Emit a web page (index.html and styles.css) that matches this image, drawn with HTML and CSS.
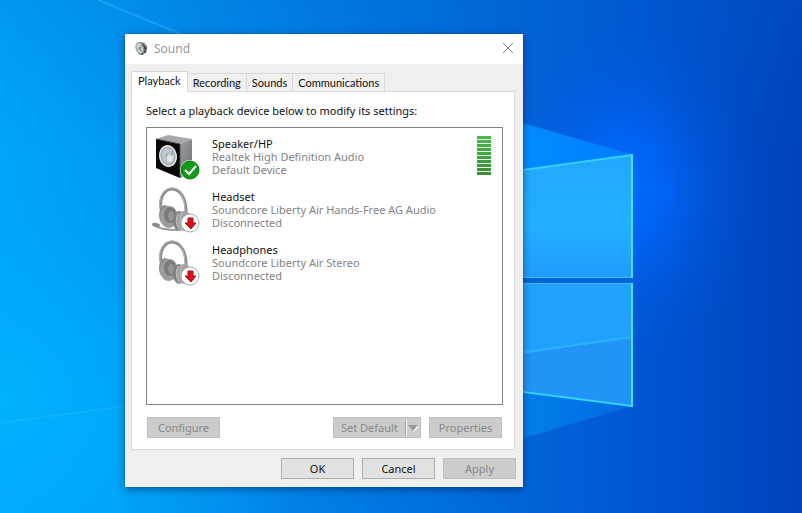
FILE: index.html
```html
<!DOCTYPE html>
<html lang="en">
<head>
<meta charset="utf-8">
<meta name="viewport" content="width=device-width, initial-scale=1">
<title>Sound</title>
<link rel="stylesheet" href="styles.css">
</head>
<body>
<main class="desktop">
  <svg class="wallpaper" viewBox="0 0 802 513" preserveAspectRatio="none" aria-hidden="true">
    <defs>
      <linearGradient id="sky" x1="0" y1="0" x2="1" y2="0">
        <stop offset="0" stop-color="#00a6fa"/>
        <stop offset=".16" stop-color="#0098f2"/>
        <stop offset=".4" stop-color="#007ee6"/>
        <stop offset=".64" stop-color="#0066d8"/>
        <stop offset=".8" stop-color="#0056d4"/>
        <stop offset="1" stop-color="#0042bc"/>
      </linearGradient>
      <radialGradient id="glow" gradientUnits="userSpaceOnUse" cx="0" cy="0" r="1" gradientTransform="translate(624 190) scale(130 170)">
        <stop offset="0" stop-color="#006cff"/>
        <stop offset=".3" stop-color="#0066fc" stop-opacity=".8"/>
        <stop offset=".65" stop-color="#0060ee" stop-opacity=".3"/>
        <stop offset="1" stop-color="#0058e0" stop-opacity="0"/>
      </radialGradient>
      <radialGradient id="corner" gradientUnits="userSpaceOnUse" cx="0" cy="0" r="1" gradientTransform="translate(0 400) scale(330 260)">
        <stop offset="0" stop-color="#00b2ff"/>
        <stop offset="1" stop-color="#00a4fa" stop-opacity="0"/>
      </radialGradient>
      <linearGradient id="shade" x1="0" y1="0" x2="0" y2="1">
        <stop offset="0" stop-color="#0060c8" stop-opacity=".2"/>
        <stop offset=".3" stop-color="#0060c8" stop-opacity="0"/>
      </linearGradient>
      <linearGradient id="paneTop" x1="0" y1="0" x2="0" y2="1">
        <stop offset="0" stop-color="#22a8ff"/>
        <stop offset=".55" stop-color="#22b0ff"/>
        <stop offset="1" stop-color="#209cff"/>
      </linearGradient>
      <linearGradient id="beamTop" x1="0" y1="0" x2="1" y2="0">
        <stop offset="0" stop-color="#0090ff"/>
        <stop offset="1" stop-color="#007cff"/>
      </linearGradient>
      <linearGradient id="beamBottom" x1="0" y1="0" x2="1" y2="0">
        <stop offset="0" stop-color="#0084ec"/>
        <stop offset="1" stop-color="#006ae0"/>
      </linearGradient>
    </defs>
    <rect width="802" height="513" fill="url(#sky)"/>
    <rect width="802" height="513" fill="url(#corner)"/>
    <rect width="802" height="513" fill="url(#shade)"/>
    <rect width="802" height="513" fill="url(#glow)"/>
    <path d="M98 0 220 50" stroke="#30b0ff" stroke-width="2" opacity=".5"/>
    <path d="M0 423 125 406V513H0z" fill="#00b0ff" opacity=".35"/>
    <path d="M0 423 125 406" stroke="#30c0ff" opacity=".5"/>
    <path d="M500 117 632 155 500 175z" fill="url(#beamTop)"/>
    <path d="M500 117 632 155" stroke="#1a90ff" opacity=".5"/>
    <path d="M500 388 632 406 500 445z" fill="url(#beamBottom)"/>
    <path d="M500 275H633V286H500z" fill="#0066d8"/>
    <path d="M500 173 632 155V278H500z" fill="url(#paneTop)"/>
    <path d="M500 283H632V406L500 389z" fill="#20a0ff"/>
    <path d="M500 356 632 337V406L500 389z" fill="#2294f8"/>
    <path d="M500 356 632 337" stroke="#28b4ff" stroke-width="2"/>
    <path d="M500 277.500H632M500 283.500H632" stroke="#42baff"/>
    <path d="M500 173 632 155M500 389 632 406" stroke="#34d0ff" stroke-width="2" fill="none"/>
    <path d="M632 154V278M632 283V407" stroke="#42e4ff" stroke-width="2"/>
  </svg>

  <section class="window" aria-labelledby="window-title">
    <header class="titlebar">
      <svg class="app-icon" viewBox="0 0 16 16" aria-hidden="true">
        <path d="M6 1 11 2 14 6 13 12 9 15 5 14z" fill="#3a4143"/>
        <path d="m9 2 2 2m0-1 2 4m-2 2 2 2m-3 0 1 3" stroke="#a8b0b2"/>
        <ellipse cx="6" cy="7.500" rx="4.500" ry="6.500" transform="rotate(-12 6 7.500)" fill="#a3abad"/>
        <ellipse cx="6" cy="7.500" rx="3" ry="5" transform="rotate(-12 6 7.500)" fill="#cdd4d5"/>
        <path d="M6 8 9 4M6 8l2 3" stroke="#6d7779"/>
        <circle cx="6" cy="8" r="1.500" fill="#8b9496"/>
      </svg>
      <h1 class="title" id="window-title">Sound</h1>
      <button class="close" type="button" aria-label="Close">
        <svg viewBox="0 0 12 12" aria-hidden="true"><path d="m1 1 10 10M11 1 1 11" stroke="#808080" fill="none"/></svg>
      </button>
    </header>

    <div class="body">
      <div class="tabs" role="tablist">
        <button class="tab tab-active" type="button" role="tab" aria-selected="true">Playback</button>
        <button class="tab" type="button" role="tab" aria-selected="false">Recording</button>
        <button class="tab" type="button" role="tab" aria-selected="false">Sounds</button>
        <button class="tab" type="button" role="tab" aria-selected="false">Communications</button>
      </div>

      <div class="panel" role="tabpanel">
        <p class="hint">Select a playback device below to modify its settings:</p>
        <ul class="devices">
          <li class="device">
            <svg class="device-icon" viewBox="0 0 48 48" aria-hidden="true">
              <defs>
                <linearGradient id="side" x1="0" y1="0" x2="1" y2="1"><stop stop-color="#9b9ba1"/><stop offset="1" stop-color="#73737a"/></linearGradient>
                <radialGradient id="cone"><stop stop-color="#8c999f"/><stop offset=".5" stop-color="#c2cbd0"/><stop offset="1" stop-color="#b4bdc2"/></radialGradient>
              </defs>
              <path d="M4 5 16 1 40 5 28 10z" fill="#a7a7ad"/>
              <path d="M28 10 40 5V38L28 44z" fill="url(#side)"/>
              <path d="M4 5 28 10V44L4 34z" fill="#080909"/>
              <path d="M4 5 28 10V44" fill="none" stroke="#4b4b4f"/>
              <ellipse cx="16" cy="22" rx="9" ry="11" transform="rotate(-10 16 22)" fill="#e8ecee"/>
              <ellipse cx="16" cy="22" rx="7" ry="9" transform="rotate(-10 16 22)" fill="url(#cone)" stroke="#9da6aa"/>
              <ellipse cx="18" cy="24" rx="3" ry="4" fill="#dfe5e8"/>
              <path d="m19 22 2-5" stroke="#8c979d"/>
              <circle cx="38" cy="36" r="10" fill="#fff"/>
              <circle cx="38" cy="36" r="9" fill="#109b18" stroke="#087a10"/>
              <path d="m33 36 4 4 7-8" fill="none" stroke="#fff" stroke-width="2"/>
            </svg>
            <div class="device-text">
              <strong class="device-name">Speaker/HP</strong>
              <span>Realtek High Definition Audio</span>
              <span>Default Device</span>
            </div>
            <div class="meter" role="img" aria-label="Output level">
              <i></i><i></i><i></i><i></i><i></i><i></i><i></i><i></i><i></i><i></i>
            </div>
          </li>
          <li class="device">
            <svg class="device-icon" viewBox="0 0 48 48" aria-hidden="true">
              <defs>
                <g id="headphones">
                  <path d="M9 22C7 10 13 2 20 2c9 0 15 11 14 26" fill="none" stroke="#8d8d8d" stroke-width="3"/>
                  <path d="M8 21C6 9 13 1 20 1c9 0 13 10 13 25" fill="none" stroke="#b8b8b8"/>
                  <ellipse cx="13" cy="28" rx="6" ry="10" fill="#8b8b8b"/>
                  <ellipse cx="17" cy="30" rx="9" ry="11" fill="#9c9c9c"/>
                  <ellipse cx="18" cy="28" rx="6" ry="8" fill="#7b7b7b"/>
                  <ellipse cx="19" cy="29" rx="3" ry="5" fill="#959595"/>
                  <ellipse cx="27" cy="34" rx="6" ry="10" fill="#808080"/>
                  <ellipse cx="32" cy="34" rx="8" ry="10" fill="#a2a2a2"/>
                  <path d="M26 26q-4 8 1 17M30 25q-4 8 0 18" fill="none" stroke="#bcbcbc"/>
                </g>
                <g id="unplugged">
                  <circle cx="38" cy="36" r="9" fill="#fff" stroke="#a8a8a8"/>
                  <path d="M36 31h5v5h3l-5 6-6-6h3z" fill="#d4101a" stroke="#b90c15"/>
                </g>
              </defs>
              <path d="M4 39q5 4 22 4" fill="none" stroke="#999" stroke-width="2"/>
              <ellipse cx="4" cy="38" rx="4" ry="2" fill="#888" transform="rotate(15 4 38)"/>
              <use href="#headphones"/>
              <use href="#unplugged"/>
            </svg>
            <div class="device-text">
              <strong class="device-name">Headset</strong>
              <span>Soundcore Liberty Air Hands-Free AG Audio</span>
              <span>Disconnected</span>
            </div>
          </li>
          <li class="device">
            <svg class="device-icon" viewBox="0 0 48 48" aria-hidden="true">
              <use href="#headphones"/>
              <use href="#unplugged"/>
            </svg>
            <div class="device-text">
              <strong class="device-name">Headphones</strong>
              <span>Soundcore Liberty Air Stereo</span>
              <span>Disconnected</span>
            </div>
          </li>
        </ul>
        <div class="actions">
          <button class="button" type="button" disabled>Configure</button>
          <button class="button split" type="button" disabled>
            <span class="split-label">Set Default</span>
            <span class="split-arrow"><svg viewBox="0 0 12 8" aria-hidden="true"><path d="M2 2h10L7 8z" fill="#fff"/><path d="M1 1h10L6 7z" fill="#969696"/></svg></span>
          </button>
          <button class="button" type="button" disabled>Properties</button>
        </div>
      </div>

      <footer class="footer">
        <button class="button" type="button">OK</button>
        <button class="button" type="button">Cancel</button>
        <button class="button" type="button" disabled>Apply</button>
      </footer>
    </div>
  </section>
</main>
</body>
</html>
```
FILE: styles.css
```css
* {
  box-sizing: border-box;
}

body {
  margin: 0;
  font: 11px/13px "Noto Sans", "Open Sans", sans-serif;
  color: #111;
}

button {
  font: inherit;
  color: inherit;
}

.desktop {
  position: relative;
  display: grid;
  min-height: 100vh;
  padding: 34px 279px 26px 125px;
  background: #0078e0;
}

.wallpaper {
  position: absolute;
  inset: 0;
  width: 100%;
  height: 100%;
}

.window {
  position: relative;
  display: flex;
  flex-direction: column;
  background: #efefef;
  box-shadow: 0 0 1px #1c5078, 0 2px 8px rgba(0, 20, 60, .5);
}

.titlebar {
  display: flex;
  align-items: center;
  gap: 5px;
  height: 30px;
  padding: 0 9px 2px;
  background: #fff;
}

.app-icon {
  width: 15px;
  height: 15px;
}

.title {
  margin: 0;
  font-size: 12px;
  font-weight: 400;
  color: #999;
}

.close {
  display: flex;
  margin-left: auto;
  padding: 0;
  border: 0;
  background: none;
}

.close svg {
  width: 12px;
  height: 12px;
}

.body {
  flex: 1;
  display: flex;
  flex-direction: column;
  padding: 7px 7px 8px 6px;
}

.tabs {
  display: flex;
  align-items: flex-end;
  font-family: Lato, sans-serif;
}

.tab {
  height: 18px;
  padding: 0 5px;
  border: 1px solid #d9d9d9;
  border-width: 1px 1px 0 0;
  background: #f0f0f0;
}

.tab-active {
  position: relative;
  height: 21px;
  margin-bottom: -1px;
  padding: 0 6px 3px;
  border-left-width: 1px;
  background: #fff;
}

.panel {
  flex: 1;
  display: flex;
  flex-direction: column;
  margin-right: 1px;
  padding: 12px 11px 11px 14px;
  border: 1px solid #dcdcdc;
  background: #fff;
}

.hint {
  margin: 0 0 10px;
}

.devices {
  flex: 1;
  margin: 0;
  padding: 6px 11px 6px 5px;
  border: 1px solid #828282;
  list-style: none;
}

.device {
  display: flex;
  gap: 12px;
  height: 53px;
}

.device-icon {
  flex: none;
  width: 48px;
  height: 48px;
}

.device-text {
  display: flex;
  flex-direction: column;
  padding-top: 3px;
  color: #838383;
}

.device-name {
  font-weight: 400;
  color: #111;
}

.meter {
  display: grid;
  gap: 1px;
  width: 14px;
  height: 39px;
  margin: 2px 0 0 auto;
  background: linear-gradient(#46bd46, #3a8c3a);
}

.meter i {
  box-shadow: 0 1px #eef8ee;
}

.meter i:last-child {
  box-shadow: none;
}

.actions {
  display: flex;
  gap: 8px;
  margin-top: 12px;
  padding: 0 1px;
}

.actions .button:first-child {
  margin-right: auto;
}

.button {
  min-width: 73px;
  height: 21px;
  padding: 0 4px;
  border: 1px solid #adadad;
  background: #e1e1e1;
}

.button:disabled {
  border-color: #bfbfbf;
  background: #ccc;
  color: #888;
}

.split {
  display: flex;
  align-items: center;
  width: 88px;
  padding: 0 0 0 7px;
}

.split-label {
  flex: 1;
  text-align: left;
  white-space: nowrap;
}

.split-arrow {
  padding: 3px 1px;
  border-left: 1px solid #a0a0a0;
  box-shadow: inset 1px 0 #fff;
}

.split-arrow svg {
  display: block;
  width: 12px;
  height: 8px;
}

.footer {
  display: flex;
  justify-content: flex-end;
  gap: 8px;
  padding-top: 8px;
}
```
